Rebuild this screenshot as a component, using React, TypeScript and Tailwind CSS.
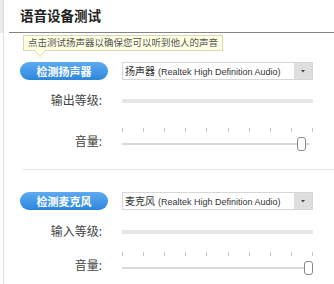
import React from "react";

const FONT = { fontFamily: '"Noto Sans", "Noto Sans CJK SC", sans-serif' };

function Ticks() {
  return (
    <div className="flex justify-between w-[191px] h-[5px]">
      {Array.from({ length: 10 }).map((_, i) => (
        <div key={i} className="w-px h-[4px] bg-[#c4c4c4]" />
      ))}
    </div>
  );
}

function Select({ label }: { label: string }) {
  return (
    <div className="w-[191px] h-[18px] border border-[#d6d6d6] bg-white flex items-center">
      <div className="flex-1 pl-[2px] leading-[14px] text-[#333] whitespace-nowrap flex items-baseline">
        <span className="text-[10px]">{label}</span>
        <span className="text-[9px] ml-[3px] font-['Liberation_Sans',sans-serif]">
          (Realtek High Definition Audio)
        </span>
      </div>
      <div className="w-[18px] h-full bg-[#dedede] flex items-center justify-center">
        <svg width="4" height="3" viewBox="0 0 4 3">
          <path d="M0 0 L4 0 L2 2.5 Z" fill="#444" />
        </svg>
      </div>
    </div>
  );
}

function Section({
  button,
  select,
  levelLabel,
  levelGap,
  sliderGap,
  thumbLeft,
}: {
  button: string;
  select: string;
  levelLabel: string;
  levelGap: string;
  sliderGap: string;
  thumbLeft: string;
}) {
  return (
    <div className="flex flex-col">
      <div className="flex items-center h-[18px]">
        <div className="ml-[16px] w-[88px] h-[18px] rounded-full bg-gradient-to-b from-[#5cabf1] to-[#2c86dc] flex items-center justify-center text-white font-bold text-[11px] leading-none">
          {button}
        </div>
        <div className="ml-[14px]">
          <Select label={select} />
        </div>
      </div>
      <div className={`flex items-center h-[18px] ${levelGap}`}>
        <div className="w-[98px] text-right text-[12px] leading-none text-[#444]">{levelLabel}</div>
        <div className="ml-[20px] w-[191px] h-[4px] bg-[#e6e6e6]" />
      </div>
      <div className={`flex h-[26px] ${sliderGap}`}>
        <div className="w-[98px] pt-[10px] text-right text-[12px] leading-none text-[#444]">音量:</div>
        <div className="ml-[20px] w-[191px] relative">
          <div className="mt-[2px]">
            <Ticks />
          </div>
          <div className="mt-[10px] h-[2px] w-[188px] bg-[#d9d9d9]" />
          <div
            className={`absolute top-[11px] ${thumbLeft} w-[9px] h-[14px] rounded-[3px] border border-[#8a8a8a] bg-white`}
          />
        </div>
      </div>
    </div>
  );
}

export default function App() {
  return (
    <div className="w-[334px] h-[284px] overflow-hidden bg-white flex" style={FONT}>
      <div className="w-[3px] flex flex-col">
        <div className="h-[33px] bg-[#e8eaed]" />
      </div>
      <div className="w-px bg-[#dedede]" />
      <div className="flex-1 flex flex-col relative">
        <div className="h-[32px] pl-[16px] flex items-center text-[13.5px] font-bold text-[#222] leading-none pt-[2px]">
          语音设备测试
        </div>
        <div className="ml-[5px] h-px bg-[#858585]" />

        <div className="absolute left-[19px] top-[35px] flex flex-col">
          <div className="h-[16px] px-[4px] bg-[#ffffe4] border border-[#d9d6b0] flex items-center text-[9.5px] leading-none text-[#555] whitespace-nowrap">
            点击测试扬声器以确保您可以听到他人的声音
          </div>
          <svg className="ml-[11px] -mt-px" width="12" height="7" viewBox="0 0 12 7">
            <path d="M0 0 L6 6.5 L12 0 Z" fill="#ffffe4" />
            <path d="M0 0 L6 6.5 L12 0" fill="none" stroke="#d9d6b0" strokeWidth="1" />
          </svg>
        </div>

        <div className="mt-[29px]">
          <Section
            button="检测扬声器"
            select="扬声器"
            levelLabel="输出等级:"
            levelGap="mt-[12px]"
            sliderGap="mt-[16px]"
            thumbLeft="left-[175px]"
          />
        </div>
        <div className="mt-[17px] ml-[19px] h-px bg-[#e6e6e6]" />
        <div className="mt-[22px]">
          <Section
            button="检测麦克风"
            select="麦克风"
            levelLabel="输入等级:"
            levelGap="mt-[13px]"
            sliderGap="mt-[9px]"
            thumbLeft="left-[182px]"
          />
        </div>
      </div>
    </div>
  );
}
